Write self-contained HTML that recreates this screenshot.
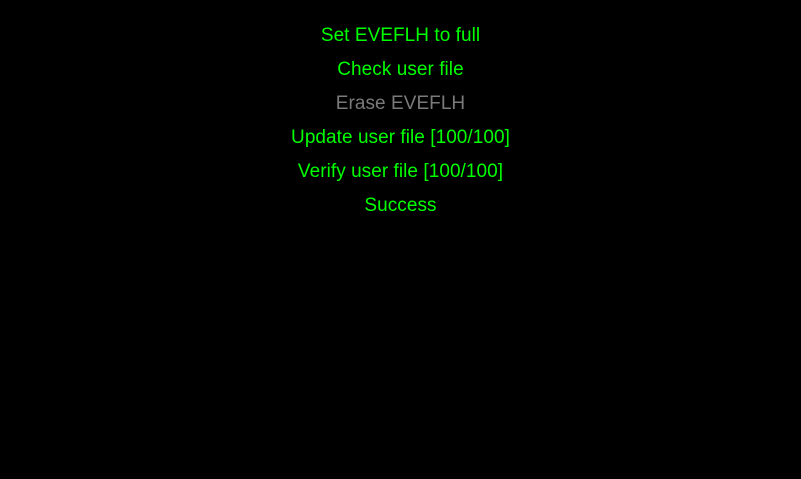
<!DOCTYPE html>
<html><head><style>
html,body{margin:0;padding:0;background:#000;width:801px;height:479px;overflow:hidden}
.w{position:absolute;top:19px;left:0;width:801px;text-align:center;font-family:"Liberation Sans",sans-serif;font-size:19px;letter-spacing:0.05px;line-height:34px;color:#00ff00;-webkit-font-smoothing:none}
.g{color:#7a7a7a}
</style></head><body>
<div class="w">
<div>Set EVEFLH to full</div>
<div>Check user file</div>
<div class="g">Erase EVEFLH</div>
<div>Update user file [100/100]</div>
<div>Verify user file [100/100]</div>
<div>Success</div>
</div>
</body></html>
